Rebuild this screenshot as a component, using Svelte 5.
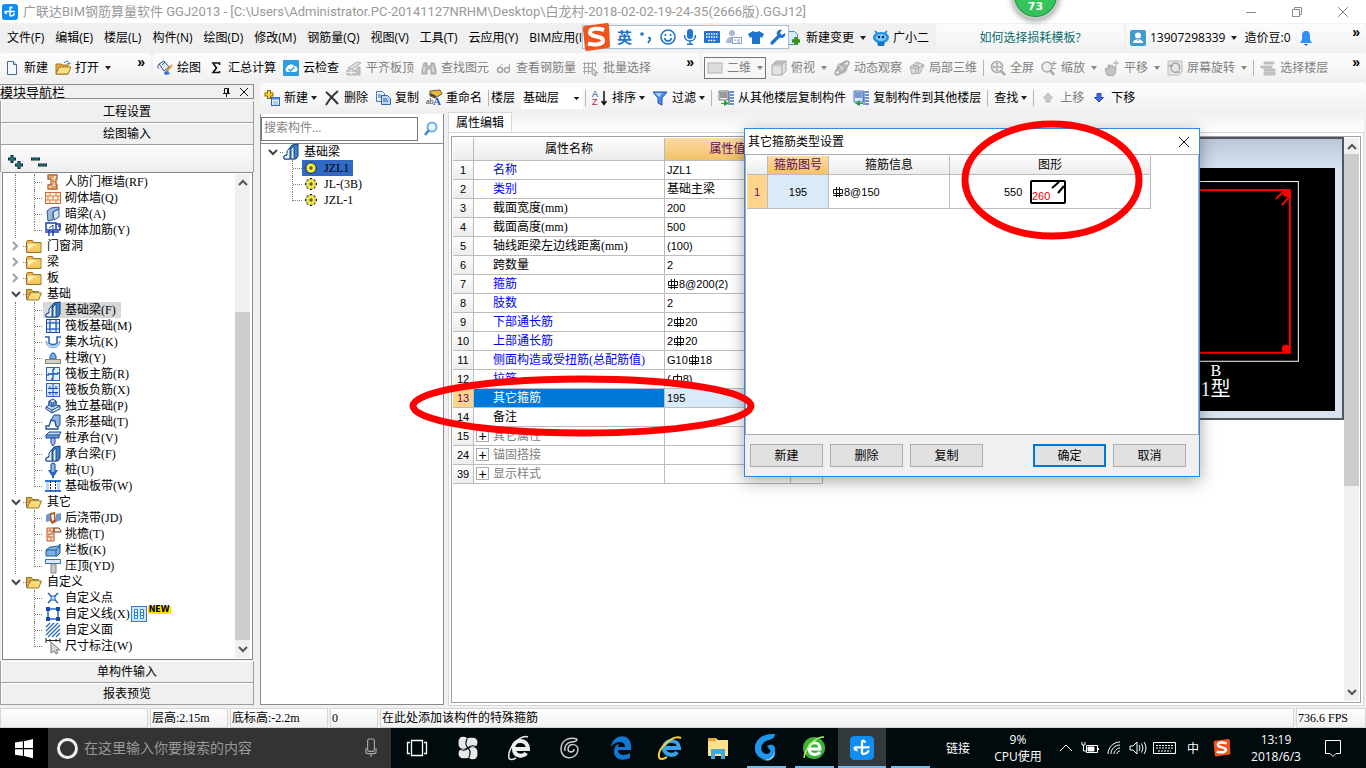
<script>
  const menus = ['文件(F)', '编辑(E)', '楼层(L)', '构件(N)', '绘图(D)', '修改(M)', '钢筋量(Q)', '视图(V)', '工具(T)', '云应用(Y)', 'BIM应用(I)'];

  const fileTools = [
    { icon: 'doc', text: '新建' },
    { icon: 'open', text: '打开', arrow: true },
  ];
  const drawTools = [
    { icon: 'paint', text: '绘图' },
    { icon: 'sigma', text: '汇总计算' },
    { icon: 'cloud', text: '云检查' },
    { icon: 'slab', text: '平齐板顶', off: true },
    { icon: 'binoculars', text: '查找图元', off: true },
    { icon: 'glasses', text: '查看钢筋量', off: true },
    { icon: 'batch', text: '批量选择', off: true },
  ];
  const viewTools = [
    { icon: 'plane', text: '二维', arrow: true, off: true, boxed: true },
    { icon: 'cube', text: '俯视', arrow: true, off: true },
    { icon: 'orbit', text: '动态观察', off: true },
    { icon: 'cubes', text: '局部三维', off: true },
    { sep: true },
    { icon: 'full', text: '全屏', off: true },
    { icon: 'zoom', text: '缩放', arrow: true, off: true },
    { icon: 'hand', text: '平移', arrow: true, off: true },
    { icon: 'rotate', text: '屏幕旋转', arrow: true, off: true },
    { sep: true },
    { icon: 'floors', text: '选择楼层', off: true },
  ];
  const editTools = [
    { icon: 'add', text: '新建', arrow: true },
    { icon: 'del', text: '删除' },
    { icon: 'copy', text: '复制' },
    { icon: 'rename', text: '重命名' },
    { sep: true },
    { floor: true },
    { sep: true },
    { icon: 'sort', text: '排序', arrow: true },
    { icon: 'filter', text: '过滤', arrow: true },
    { sep: true },
    { icon: 'copyfrom', text: '从其他楼层复制构件' },
    { icon: 'copyto', text: '复制构件到其他楼层' },
    { sep: true },
    { text: '查找', arrow: true },
    { sep: true },
    { icon: 'up', text: '上移', off: true },
    { icon: 'down', text: '下移' },
  ];

  const navTree = [
    { icon: 'frame', text: '人防门框墙(RF)' },
    { icon: 'brick', text: '砌体墙(Q)' },
    { icon: 'hidden', text: '暗梁(A)' },
    { icon: 'rebar', text: '砌体加筋(Y)', last: true },
    { folder: true, text: '门窗洞' },
    { folder: true, text: '梁' },
    { folder: true, text: '板' },
    { folder: true, open: true, text: '基础' },
    { icon: 'beam', text: '基础梁(F)', selected: true },
    { icon: 'raft', text: '筏板基础(M)' },
    { icon: 'pit', text: '集水坑(K)' },
    { icon: 'pier', text: '柱墩(Y)' },
    { icon: 'mainbar', text: '筏板主筋(R)' },
    { icon: 'negbar', text: '筏板负筋(X)' },
    { icon: 'isolated', text: '独立基础(P)' },
    { icon: 'strip', text: '条形基础(T)' },
    { icon: 'pilecap', text: '桩承台(V)' },
    { icon: 'beam', text: '承台梁(F)' },
    { icon: 'pile', text: '桩(U)' },
    { icon: 'band', text: '基础板带(W)', last: true },
    { folder: true, open: true, text: '其它' },
    { icon: 'post', text: '后浇带(JD)' },
    { icon: 'eave', text: '挑檐(T)' },
    { icon: 'rail', text: '栏板(K)' },
    { icon: 'coping', text: '压顶(YD)', last: true },
    { folder: true, open: true, text: '自定义' },
    { icon: 'point', text: '自定义点', end: true },
    { icon: 'line', text: '自定义线(X)', end: true, isNew: true },
    { icon: 'area', text: '自定义面', end: true },
    { icon: 'dim', text: '尺寸标注(W)', end: true, last: true },
  ];

  const members = ['JZL1', 'JL-(3B)', 'JZL-1'];

  // "$" = HRB400 bar mark, "%" = HPB300 bar mark
  const props = [
    { no: 1, name: '名称', value: 'JZL1', key: true },
    { no: 2, name: '类别', value: '基础主梁', key: true },
    { no: 3, name: '截面宽度(mm)', value: '200' },
    { no: 4, name: '截面高度(mm)', value: '500' },
    { no: 5, name: '轴线距梁左边线距离(mm)', value: '(100)' },
    { no: 6, name: '跨数量', value: '2' },
    { no: 7, name: '箍筋', value: '$8@200(2)', key: true },
    { no: 8, name: '肢数', value: '2', key: true },
    { no: 9, name: '下部通长筋', value: '2$20', key: true },
    { no: 10, name: '上部通长筋', value: '2$20', key: true },
    { no: 11, name: '侧面构造或受扭筋(总配筋值)', value: 'G10$18', key: true },
    { no: 12, name: '拉筋', value: '(%8)', key: true },
    { no: 13, name: '其它箍筋', value: '195', current: true },
    { no: 14, name: '备注', value: '' },
    { no: 15, name: '其它属性', value: '', group: true },
    { no: 24, name: '锚固搭接', value: '', group: true },
    { no: 39, name: '显示样式', value: '', group: true },
  ];

  const hasCjk = (s) => /[\u4e00-\u9fff]/.test(s);

  let floor = $state('基础层');
  let current = $state('JZL1');
  let keyword = $state('');
  let query = $state('');

  const icons = {
    logo: '<rect width="16" height="16" rx="3" fill="#0f8df2"/><path d="M8 3v9M3 7.500h10M8 3c1 0 2 .5 2 1.500M3 7.500c0 1.500 1 2 2 2M8 12c2 0 4-1 4.500-2.500" fill="none" stroke="#fff" stroke-width="1.500"/>',
    doc: '<path d="M3.500 1.500h6l3 3v10h-9z" fill="#f4f9ff" stroke="#46689c"/><path d="M9.500 1.500v3h3" fill="#cfe0f5" stroke="#46689c"/>',
    open: '<path d="M1 4h5l1 1h6v9H1z" fill="#e8b23c" stroke="#a3741b"/><path d="M1 14l3-7h12l-3 7z" fill="#ffe08a" stroke="#a3741b"/><path d="M9 3c2-3 5-2 5 1M12.500 3l1.500 1.500L15.500 3" fill="none" stroke="#3c6ca8"/>',
    paint: '<path d="M2 4l5-3 5 6-5 4z" fill="#dfe8f7" stroke="#34548a"/><path d="M2 4c-2 2-1 4 0 5M5 5l3-3" fill="none" stroke="#34548a"/><path d="M15 5l-6 7" stroke="#e0a12c" stroke-width="2"/><path d="M7 12l4-1 2 3-5 1z" fill="#2f6fd0"/>',
    sigma: '<path d="M11.500 5V3H5l3.500 5L5 12.500h6.500V11" fill="none" stroke="#111" stroke-width="1.600"/>',
    cloud: '<rect width="16" height="16" rx="1" fill="#2d9de0"/><path d="M4 12a3 3 0 010-5 4 4 0 017-1 3 3 0 011 6z" fill="#fff"/><path d="M5.500 9l2 2 4-4" fill="none" stroke="#2d9de0" stroke-width="1.500"/>',
    slab: '<path d="M2 8l9-6 4 1-9 6z" fill="#e2e2e2" stroke="#aaa"/><path d="M1 10h9v5H1zM11 7h3v8h-3z" fill="#c9c9c9" stroke="#b0b0b0"/><path d="M1 12.500h9M5 10v5" stroke="#f2f2f2"/>',
    binoculars: '<path d="M3 3h3v3h4V3h3l2 7v4h-5V9H6v5H1v-4z" fill="#bdbdbd" stroke="#a5a5a5"/><path d="M3 7v5M12 7v5" stroke="#eee"/>',
    glasses: '<circle cx="4" cy="10" r="2.500" fill="none" stroke="#a5a5a5" stroke-width="1.500"/><circle cx="11" cy="10" r="2.500" fill="none" stroke="#a5a5a5" stroke-width="1.500"/><path d="M1.500 9l5-5M13.500 9V4M6.500 9.500h2" stroke="#a5a5a5" fill="none"/>',
    batch: '<path d="M1.500 2v12M5.500 2v12M9.500 2v7M0 3.500h13M0 7.500h10M0 11.500h8M12.500 2v5" stroke="#a5a5a5" fill="none"/><path d="M9 8l6 5h-3l1 3-2-1-2-1z" fill="#ddd" stroke="#999"/>',
    plane: '<rect x="1" y="3" width="14" height="10" fill="#ddd" stroke="#b5b5b5"/>',
    cube: '<path d="M1 5l4-4h10v10l-4 4H1z" fill="#e2e2e2" stroke="#aaa"/><path d="M2 4l3-3h9l-3 3z" fill="#bbb"/><path d="M1 5h10v10M11 5l4-4" fill="none" stroke="#aaa"/>',
    orbit: '<circle cx="8" cy="8" r="5.500" fill="#bbb"/><ellipse cx="8" cy="8" rx="9" ry="3" transform="rotate(-45 8 8)" fill="none" stroke="#a8a8a8" stroke-width="1.500"/><path d="M5 5l4 5" stroke="#eee"/>',
    cubes: '<path d="M1 7l7-5 7 3-4 8-8 1z" fill="#dcdcdc" stroke="#aaa"/><path d="M1 7l6 2 8-4M7 9l-1 5M4 5l6 2-1 6M10 3l-6 5" fill="none" stroke="#aaa"/>',
    full: '<circle cx="7" cy="7" r="5.500" fill="#eee" stroke="#aaa" stroke-width="1.500"/><path d="M7 3v8M3 7h8M6 4l1-1 1 1M6 10l1 1 1-1M4 6L3 7l1 1M10 6l1 1-1 1" stroke="#999" fill="none"/><path d="M11 11l4 4" stroke="#aaa" stroke-width="2.500"/>',
    zoom: '<circle cx="6" cy="7" r="5" fill="#eee" stroke="#aaa" stroke-width="1.500"/><path d="M9 10l4 5" stroke="#aaa" stroke-width="2.500"/><path d="M13 1v5M10.500 3.500h5M11 8.500h4" stroke="#999"/>',
    hand: '<path d="M3 15L1 9l2-1 1 2V5h2v3l1-3 2 1v2l2-2 1 2-1 6-2 2z" fill="#c4c4c4" stroke="#aaa"/><path d="M12 0v6M9 3h6" stroke="#aaa"/>',
    rotate: '<path d="M1 1h14v11l-3 3H1z" fill="#e6e6e6" stroke="#bbb"/><path d="M4 6a4.500 4.500 0 118 4M4 8c0 3 3 5 6 4M2 5l2 2 2-2M13 12H9" fill="none" stroke="#a5a5a5" stroke-width="1.500"/>',
    floors: '<path d="M4 2h10v2H4zM1 6h11v2H1zM4 9h11v2H4zM4 12h11v3H4z" fill="#c8c8c8" stroke="#b0b0b0" stroke-width=".7"/>',
    add: '<path d="M5 0v9M.5 4.500h9" stroke="#8a6a00" stroke-width="4"/><path d="M5 1v7M1.500 4.500h7" stroke="#ffd52e" stroke-width="2"/><rect x="7.500" y="7.500" width="8" height="8" fill="#e4f0ff" stroke="#2f66c5"/><path d="M8 8.500h7" stroke="#4f8bea" stroke-width="2"/><path d="M9 12h5M9 14h5" stroke="#85a9dd"/>',
    del: '<path d="M2 2c4 3 8 8 12 12M14 1C9 5 5 10 2 15" fill="none" stroke="#333" stroke-width="2"/>',
    copy: '<path d="M1.500 1.500h6l2 2v8h-8z" fill="#e5effb" stroke="#4a76b8"/><path d="M6.500 5.500h6l3 3v6h-9z" fill="#bcd5f5" stroke="#3864ab"/><path d="M3 5h3M3 7h3M8 9h4M8 11h5" stroke="#3864ab"/>',
    rename: '<path d="M4 1l10-1 2 4-7 4-5-2z" fill="#e6bb3a" stroke="#6b5f32"/><path d="M4 4l6 3" stroke="#444" stroke-width="2"/><text x="0" y="14" font-size="8" font-family="Liberation Serif" fill="#333">ab</text><text x="7" y="15" font-size="11" font-weight="bold" font-family="Liberation Serif" fill="#2455bf">A</text>',
    sort: '<text x="0" y="7" font-size="9" font-family="Liberation Sans" fill="#2249b5">A</text><text x="0" y="15" font-size="9" font-family="Liberation Sans" fill="#b02040">Z</text><path d="M12 1v13M9.500 11l2.500 3.500 2.500-3.500" fill="none" stroke="#111" stroke-width="1.500"/>',
    filter: '<path d="M1 2h14L10 8v7l-4-2V8z" fill="#4d8ff0" stroke="#1d4fae"/><path d="M3 3h7L7 7z" fill="#b5d3ff"/>',
    copyfrom: '<path d="M1 1h9v9H1z" fill="#eee" stroke="#777"/><path d="M2 3h7M2 5h7M2 7h7" stroke="#444"/><path d="M12 2h4M12 5h4M12 8h4M12 11h4M12 14h4" stroke="#3970c2" stroke-width="1.600"/><path d="M11 1v14" stroke="#284f91"/><path d="M3 13h3v-3l5 3.500-5 2.500v-2H3z" fill="#20a436"/>',
    copyto: '<path d="M1 1h9v11H1z" fill="#d7e6ff" stroke="#4b74b7"/><path d="M2 3h7M2 5h7M2 7h7" stroke="#244e9b"/><path d="M12 2h4M12 5h4M12 8h4M12 11h4M12 14h4" stroke="#3970c2" stroke-width="1.600"/><path d="M11 1v14" stroke="#284f91"/><path d="M10 13H7v-3l-5 3.500 5 2.500v-2h3z" fill="#20a436"/>',
    up: '<path d="M8 3l4.500 5H10v4H6V8H3.500z" fill="#ccc" stroke="#b5b5b5"/>',
    down: '<path d="M8 12L3.500 7.500H6v-4h4v4h2.500z" fill="#3f6ce0" stroke="#2448ac"/>',
    change: '<path d="M1.500 1.500h7l3 3v10h-10z" fill="#d8ecfb" stroke="#4a8cc0"/><path d="M10 7v8M6 11h8" stroke="#38921c" stroke-width="3.500"/>',
    robot: '<path d="M2 1l3 3h6l3-3" fill="none" stroke="#157ac4" stroke-width="1.500"/><ellipse cx="8" cy="7.500" rx="8" ry="5.500" fill="#1a91e4"/><path d="M4 12h8l-1 4H5z" fill="#1478c4"/><ellipse cx="8" cy="7.500" rx="5.500" ry="3.500" fill="#7cc6fa"/><circle cx="6" cy="7" r="1.200" fill="#123"/><circle cx="10" cy="7" r="1.200" fill="#123"/>',
    user: '<rect width="16" height="16" rx="2" fill="#3f9bd3"/><circle cx="8" cy="5.500" r="3" fill="#fff"/><path d="M3 13c0-5 10-5 10 0z" fill="#fff"/><path d="M8 8v3" stroke="#3f9bd3"/>',
    bell: '<path d="M8 1c-3 0-4 2-4 5v4l-2 3h12l-2-3V6c0-3-1-5-4-5z" fill="#2f8ff5"/><path d="M6 14h4l-2 2z" fill="#1c62bb"/>',
    folder: '<path d="M.5 3.500l1-1h5l1 2h7.500v10H.5z" fill="#e8b44a" stroke="#94732a"/><path d="M1.500 5.500h13v8h-13z" fill="#f5cc62"/><path d="M2 6h9L2 12z" fill="#ffeeb5"/>',
    folderopen: '<path d="M.5 13.500v-10h5l1 2h6v2" fill="#dfa940" stroke="#94732a"/><path d="M1 14l3-7h11.500l-3 7z" fill="#fbd873" stroke="#94732a"/><path d="M5 8h8" stroke="#fff2c4"/>',
    frame: '<path d="M3 1h9v4h-1v6h1v4H3v-4h3V5H3z" fill="#ffe3c8" stroke="#b65c1c" stroke-width="1.300"/><path d="M3 3h6M6 13h6M8 5v3h3M6 10h3" fill="none" stroke="#b65c1c"/>',
    brick: '<rect x=".5" y="2.500" width="15" height="11" fill="#fff1dd" stroke="#c8703a"/><path d="M1 6h14M1 10h14M5 3v3M11 3v3M8 6v4M3 6v4M13 6v4M5 10v3M11 10v3" stroke="#d5824c"/>',
    hidden: '<path d="M2 5l4-3 8-1v2L8 6v8l-5 1z" fill="#9db9de" stroke="#35568c"/><path d="M8 6l6-3v8l-5 3z" fill="#d9e5f5" stroke="#35568c"/>',
    rebar: '<path d="M1 1h10v7H1zM11 2h4v6h-4zM0 10h12M4 8v6M8 8v6M13 4h3M13 9v2" stroke="#1a3fb8" stroke-width="1.500" fill="none"/><path d="M4 6l4-3v4" stroke="#1a4bc0" fill="none"/>',
    beam: '<path d="M1 15v-3l4-2V6l4-5 6-1v12l-2 3z" fill="#3f7fc8" stroke="#143c7a"/><path d="M1 15v-3l3-1V7l3-3v11zM8 15V5l3-3v13z" fill="#e7f1fc" stroke="#1d4f94"/>',
    raft: '<rect x="1.500" y="1.500" width="13" height="13" fill="#e2edff" stroke="#174ba6"/><path d="M5 1v14M11 1v14M1 5h14M1 11h14" stroke="#174ba6"/><rect x="5" y="5" width="6" height="6" fill="#fff" stroke="#2c74d4" stroke-width="1.500"/>',
    pit: '<path d="M0 3h4v6c1 2 7 2 8 0V3h4" fill="none" stroke="#2460b8" stroke-width="1.500"/><path d="M1 7c0 9 14 9 14 0l-3 3c-2 2-6 2-8 0z" fill="#c2dcfa" stroke="#7ca2d4"/>',
    pier: '<path d="M5 9V6l2-3h2l2 3v3z" fill="#7eaeed" stroke="#2456a7"/><rect x=".5" y="9.500" width="15" height="4" fill="#d2d2c8" stroke="#85857c"/>',
    mainbar: '<rect x="1.500" y="1.500" width="13" height="13" fill="#e6f0ff" stroke="#2765c7"/><path d="M8 3v10H6M3 8h10M3 8v2M13 8V6M8 3h2" stroke="#1950b2" fill="none" stroke-width="1.300"/>',
    negbar: '<rect x="1.500" y="1.500" width="13" height="13" fill="#d5e5ff" stroke="#2765c7"/><path d="M8 2v12M3 6.500h10M3 10.500h10M5 4v3M11 4v3M5 10v3M11 10v3" stroke="#1950b2"/>',
    isolated: '<path d="M1 9l3-2V3l4-2 3 2v4l4 1v3l-8 4-6-4z" fill="#cfe0f6" stroke="#1c4a8c"/><path d="M4 7V3l3 2v4zM8 5l3-2v4L8 9z" fill="#7aa6df" stroke="#1c4a8c"/><path d="M1 9l6 3 8-4M7 12v3" fill="none" stroke="#1c4a8c"/>',
    strip: '<path d="M5 8l4-7 6 0v10l-3 3z" fill="#8fb5e4" stroke="#234f8e"/><path d="M1 15v-3h3l2-6 4 1 1 5 2 1v2z" fill="#fff" stroke="#234f8e" stroke-width="1.300"/>',
    pilecap: '<path d="M1 5l3-3h12l-2 4H1z" fill="#b8d5f8" stroke="#1c4a8c"/><path d="M1 5h13v3H1z" fill="#6a9ee2" stroke="#1c4a8c"/><path d="M6 8h4v5l-2 3-2-3z" fill="#9ec3f0" stroke="#1c4a8c"/>',
    pile: '<path d="M6 2l2-1 2 1v8l-2 6-2-6z" fill="#8fbaf0" stroke="#164488"/><path d="M3 8h3v2h4V8h3l-3 5H6z" fill="#2765b5"/>',
    band: '<path d="M0 3h16M0 13h16" stroke="#2f76d5" stroke-width="2"/><path d="M1 4h3v8H1zM12 4h3v8h-3z" fill="#b9d6fa"/><path d="M5.500 3v10M10.500 3v10" stroke="#222" stroke-dasharray="2 1"/>',
    post: '<path d="M1 5l4-2v8l-4 1zM11 4l5-1v7l-5 2z" fill="#6c97d4"/><path d="M5 3l5-1 1 10-4 2-2-3z" fill="#a85a2b"/><path d="M6 5l3-1v6l-2 1z" fill="#f0ece8"/>',
    eave: '<path d="M2 2h7v13H2z" fill="#ffe6cf" stroke="#c0592a"/><path d="M2 5h7M2 8h7M2 11h7M5 2v3M7 5v3M4 8v3M6 11v4" stroke="#c46a32"/><path d="M9 2h5l2 3v1H9z" fill="#ffe6cf" stroke="#5c3a22"/>',
    rail: '<path d="M1 8l4-3 9-1 1-2v9l-3 3H1z" fill="#79b2e4" stroke="#1f588e"/><path d="M1 8h10l4-4M11 8v6" fill="none" stroke="#1f588e"/>',
    coping: '<path d="M.5 1.500h15v4H.5z" fill="#d5e9ff" stroke="#2b70cc"/><path d="M6 6h5v9H6z" fill="#c9c9c9" stroke="#858585"/>',
    point: '<path d="M3 3l10 10M13 3L3 13" stroke="#174a9e" stroke-width="1.200"/><rect x="6" y="6" width="4" height="4" fill="#cfe3ff" stroke="#1d66d2"/>',
    line: '<path d="M3 3h10v10H3z" fill="#fff" stroke="#2267d6" stroke-width="1.500"/><path d="M1 1h4v4H1zM11 1h4v4h-4zM1 11h4v4H1zM11 11h4v4h-4z" fill="#184da5"/>',
    area: '<path d="M1 5l4-4M1 9l8-8M1 13l12-12M3 15L15 3M7 15l8-8M11 15l4-4" stroke="#2267c8" stroke-width="1.200"/>',
    dim: '<path d="M1 0v5M15 0v5M1 2.500h14M5 1v3M11 1v3" stroke="#222"/><path d="M6 4l9 8h-4l2 3-2 1-2-3-3 2z" fill="#d8d8d8" stroke="#777"/>',
    gear: '<path d="M8 2v12M2 8h12M4 4l8 8M12 4l-8 8" stroke="#222" stroke-width="2.500"/><circle cx="8" cy="8" r="4.500" fill="#f3ec3c"/><path d="M8 3v10M3 8h10M4.500 4.500l7 7M11.500 4.500l-7 7" stroke="#f3ec3c"/><path d="M8 6v4M6 8h4" stroke="#333"/>',
    newpage: '<rect x=".5" y=".5" width="15" height="15" fill="#cde6ff" stroke="#2c7fd0"/><path d="M3.500 3.500h3v9h-3zM9.500 3.500h3v9h-3zM3 6.500h4M3 9.500h4M9 6.500h4M9 9.500h4" fill="#fff" stroke="#2c7fd0"/>',
    search: '<circle cx="9" cy="6" r="4.500" fill="#eaf5ff" stroke="#6db3ec" stroke-width="2"/><path d="M6 9l-4 5" stroke="#3e85c8" stroke-width="2.500"/>',
    // input method bar
    sogou: '<path d="M3 3l22-3q2 0 2 2l1 21q0 2-2 2L5 28q-2 0-2-2L1 6q0-3 2-3z" fill="#f1531f"/><path d="M22 7C16 5 8 5 8 9.500c0 5 13 3 13 8 0 4-8 5-15 3" fill="none" stroke="#fff" stroke-width="4"/>',
    comma: '<circle cx="4" cy="5" r="1.800" fill="#1f74d0"/><path d="M10 9q3-1 2 2l-2 3" fill="none" stroke="#1f74d0" stroke-width="1.800"/>',
    smile: '<circle cx="8" cy="8" r="7" fill="none" stroke="#1f74d0" stroke-width="1.600"/><path d="M4.500 9c1 4 6 4 7 0M5.500 5v2M10.500 5v2" fill="none" stroke="#1f74d0" stroke-width="1.600"/>',
    mic: '<rect x="5" y="0" width="6" height="10" rx="3" fill="#1f74d0"/><path d="M2.500 6c0 8 11 8 11 0M8 12v3M5 15.300h6" fill="none" stroke="#1f74d0" stroke-width="1.500"/>',
    kbd: '<rect x="0" y="2" width="16" height="12" rx="1" fill="#1f74d0"/><path d="M2 5h12M2 8h12M4 11.500h8" stroke="#fff" stroke-width="1.500" stroke-dasharray="1.500 1"/>',
    card: '<circle cx="6" cy="4" r="3" fill="#a9b8d4"/><path d="M0 14c0-7 8-7 9-5v5z" fill="#a9b8d4"/><rect x="6.500" y="8.500" width="9" height="6" fill="#fff" stroke="#8ba2cb"/><path d="M8 11h2M11 11h3M11 13h3" stroke="#8ba2cb"/>',
    shirt: '<path d="M5 2q3 2 6 0l5 3-2 4-2-1v7H4V8L2 9 0 5z" fill="#1f74d0"/>',
    wrench: '<path d="M2 14l7-7" stroke="#1f74d0" stroke-width="3.200" stroke-linecap="round"/><path d="M15 4l-3 2-2-2 2-3c-4-1-6 2-5 5s5 4 7 2 1-3 1-4z" fill="#1f74d0"/>',
    // taskbar
    win: '<path d="M0 3l7-1v6H0zM8 2l8-2v8H8zM0 9h7v6l-7-1zM8 9h8v8l-8-2z" fill="#fff"/>',
    mic2: '<rect x="5" y="0" width="6" height="11" rx="1.500" fill="none" stroke="#aaa"/><path d="M3.500 8v3.500q0 1.500 2 1.500h5q2 0 2-1.500V8M8 13v3" fill="none" stroke="#aaa"/>',
  };
</script>

{#snippet icon(name, size = 16)}
  <svg class="icon" width={size} height={size} viewBox="0 0 16 16" aria-hidden="true">{@html icons[name]}</svg>
{/snippet}

{#snippet tools(list)}
  {#each list as t}
    {#if t.sep}
      <i class="sep"></i>
    {:else if t.floor}
      <span class="floor">
        <label for="floor">楼层</label>
        <select id="floor" bind:value={floor}>
          <option>基础层</option>
          <option>首层</option>
        </select>
      </span>
    {:else}
      <button class="tool" class:boxed={t.boxed} disabled={t.off}>
        {#if t.icon}{@render icon(t.icon)}{/if}
        {t.text}
        {#if t.arrow}<i class="arrow"></i>{/if}
      </button>
    {/if}
  {/each}
{/snippet}

{#snippet bars(text)}
  {#each text.split(/([$%])/) as part}
    {#if part === '$' || part === '%'}
      <svg class="bar" width="12" height="12" viewBox="0 0 12 12" aria-label="钢筋">
        <path d={part === '$' ? 'M4.500 1v10M7.500 1v10M1.500 3.500h9v4h-9zM1 9.500h10' : 'M6.500 1v10M2.500 3.500h8v5h-8z'} />
      </svg>
    {:else}{part}{/if}
  {/each}
{/snippet}

{#snippet chevron(open)}
  <svg class="chev" width="10" height="10" viewBox="0 0 10 10" aria-hidden="true">
    {#if open}<path d="M1 3l4 4 4-4" stroke="#444" />{:else}<path d="M2 1l4 4-4 4" stroke="#a0a0a0" />{/if}
  </svg>
{/snippet}

{#snippet scrollArrow(d)}
  <svg width="10" height="8" viewBox="0 0 10 8" aria-hidden="true"><path {d} fill="none" stroke="#555" stroke-width="2" /></svg>
{/snippet}

<div class="app">
  <header class="title">
    {@render icon('logo')}
    <h1>广联达BIM钢筋算量软件 GGJ2013 - [C:\Users\Administrator.PC-20141127NRHM\Desktop\白龙村-2018-02-02-19-24-35(2666版).GGJ12]</h1>
    <div class="winbtns">
      <button aria-label="最小化"><svg width="12" height="12"><path d="M1 6.500h10" /></svg></button>
      <button aria-label="还原"><svg width="12" height="12"><path d="M1.500 3.500h7v7h-7zM3.500 3V1.500h7v7H9" /></svg></button>
      <button aria-label="关闭"><svg width="12" height="12"><path d="M1 1l10 10M11 1L1 11" /></svg></button>
    </div>
  </header>

  <div class="menubar">
    <nav class="menus">
      {#each menus as m}<button>{m}</button>{/each}
    </nav>
    <div class="menutools">
      <button class="tool">{@render icon('change')}新建变更<i class="arrow"></i></button>
      <button class="tool">{@render icon('robot')}广小二</button>
    </div>
    <div class="strip tip"><a href="#help">如何选择损耗模板?</a></div>
    <div class="strip account">
      <button class="tool">{@render icon('user')}13907298339<i class="arrow"></i></button>
      <span>造价豆:0</span>
      {@render icon('bell')}
      <span class="more">»</span>
    </div>
  </div>

  <div class="toolbar">
    <div class="strip">{@render tools(fileTools)}<span class="more">»</span></div>
    <div class="strip">{@render tools(drawTools)}<span class="more">»</span></div>
    <div class="strip">{@render tools(viewTools)}<span class="more">»</span></div>
  </div>

  <main>
    <aside class="nav">
      <div class="navhead">
        <h2>模块导航栏</h2>
        <button aria-label="固定"><svg width="10" height="10"><path d="M2 6.500h7M3.500 6V1.500h3V6M7.500 1v5M5.500 7v3" /></svg></button>
        <button aria-label="关闭"><svg width="10" height="10"><path d="M1 1l8 8M9 1L1 9" /></svg></button>
      </div>
      <button class="section">工程设置</button>
      <button class="section">绘图输入</button>
      <div class="navtools">
        <button aria-label="全部展开"><svg width="18" height="16"><path d="M5 1v8M1 5h8M12 7v8M8 11h8" stroke="#123" stroke-width="3" /><path d="M5 2v6M2 5h6M12 8v6M9 11h6" stroke="#0fa39a" /></svg></button>
        <button aria-label="全部折叠"><svg width="18" height="16"><path d="M1 5h9M8 11h9" stroke="#123" stroke-width="3" /><path d="M2 5h7M9 11h7" stroke="#0fa39a" /></svg></button>
      </div>
      <div class="treebox">
        <ul class="tree">
          {#each navTree as n}
            {#if n.folder}
              <li class="folder">{@render chevron(n.open)}<i class="dots"></i>{@render icon(n.open ? 'folderopen' : 'folder')}<span>{n.text}</span></li>
            {:else}
              <li>
                <i class="trunk" class:blank={n.end}></i>
                <i class="branch" class:last={n.last}></i>
                <span class="node" class:selected={n.selected}>{@render icon(n.icon)}<span>{n.text}</span></span>
                {#if n.isNew}{@render icon('newpage')}<b class="new">NEW</b>{/if}
              </li>
            {/if}
          {/each}
        </ul>
        <div class="scroll navscroll">
          {@render scrollArrow('M1 6l4-4 4 4')}
          <i class="thumb"></i>
          {@render scrollArrow('M1 2l4 4 4-4')}
        </div>
      </div>
      <button class="section">单构件输入</button>
      <button class="section">报表预览</button>
    </aside>

    <section class="work">
      <div class="strip edit">{@render tools(editTools)}</div>
      <div class="panes">
        <div class="members">
          <div class="find">
            <input type="search" aria-label="搜索构件" placeholder="搜索构件..." bind:value={keyword} />
            <button aria-label="搜索">{@render icon('search')}</button>
          </div>
          <ul class="tree">
            <li class="root">{@render chevron(true)}<i class="dots"></i>{@render icon('beam')}<span>基础梁</span></li>
            {#each members as m, i}
              <li class="member">
                <i class="branch" class:last={i === members.length - 1}></i>
                <button class:selected={current === m} onclick={() => (current = m)}>{@render icon('gear')}{m}</button>
              </li>
            {/each}
          </ul>
        </div>

        <div class="props">
          <div class="tabs"><button>属性编辑</button></div>
          <div class="page">
            <div class="inner">
              <table class="grid">
                <colgroup><col class="c1" /><col class="c2" /><col class="c3" /><col class="c4" /></colgroup>
                <thead>
                  <tr><th></th><th>属性名称</th><th class="hot">属性值</th><th></th></tr>
                </thead>
                <tbody>
                  {#each props as p}
                    <tr class:key={p.key} class:current={p.current} class:group={p.group}>
                      <th>{p.no}</th>
                      <td class="name">{#if p.group}<button aria-label="展开">+</button>{/if}<span>{p.name}</span></td>
                      <td class="value" class:latin={!hasCjk(p.value)}>{@render bars(p.value)}</td>
                      <td></td>
                    </tr>
                  {/each}
                </tbody>
              </table>
              <div class="preview">
                <svg viewBox="0 0 500 243" preserveAspectRatio="xMaxYMin slice" role="img" aria-label="箍筋简图">
                  <rect width="500" height="243" fill="#000" />
                  <rect x="60.500" y="13.500" width="403" height="179" fill="none" stroke="#fff" />
                  <rect x="70" y="22" width="385" height="162" fill="none" stroke="#f00" stroke-width="2" />
                  <path d="M450 22l-9 9M455 28l-8 9" stroke="#f00" stroke-width="2" />
                  <circle cx="452" cy="25" r="4" fill="#f00" />
                  <circle cx="451" cy="180" r="4" fill="#f00" />
                  <text x="376" y="207" font-size="16">B</text>
                  <text x="366" y="227" font-size="20">1型</text>
                </svg>
              </div>
              <div class="scroll mainscroll">
                {@render scrollArrow('M1 6l4-4 4 4')}
                <i class="thumb"></i>
                {@render scrollArrow('M1 2l4 4 4-4')}
              </div>
            </div>
          </div>
        </div>
      </div>
    </section>
  </main>

  <footer class="status">
    <span></span><span>层高:2.15m</span><span>底标高:-2.2m</span><span>0</span><span>在此处添加该构件的特殊箍筋</span><span>736.6 FPS</span>
  </footer>

  <div class="taskbar">
    <button class="start" aria-label="开始">{@render icon('win', 18)}</button>
    <label class="cortana">
      <i class="ring"></i>
      <input aria-label="搜索" placeholder="在这里输入你要搜索的内容" bind:value={query} />
      {@render icon('mic2', 18)}
    </label>
    <div class="apps wide">
      <button aria-label="任务视图"><svg width="22" height="20" viewBox="0 0 22 20"><path d="M5.500 2.500h11v15h-11zM4 4.500H1.500v11H4M18 4.500h2.500v11H18" fill="none" stroke="#fff" stroke-width="1.300" /></svg></button>
      <button aria-label="风车"><svg width="24" height="24" viewBox="0 0 24 28"><g fill="#e8e8e8"><rect x="1" y="1" width="11" height="14" rx="5" /><rect x="9" y="2" width="14" height="11" rx="5" /><rect x="12" y="13" width="11" height="14" rx="5" /><rect x="1" y="15" width="14" height="11" rx="5" /></g><path d="M12 14C9 11 9 7 11 3M12 14c3-3 7-3 10-1M12 14c3 3 3 7 1 11M12 14c-3 3-7 3-10 1" fill="none" stroke="#010a0d" stroke-width="1.300" /></svg></button>
      <button aria-label="浏览器"><svg width="26" height="28" viewBox="0 0 26 28"><path d="M20 19c-2 4-12 4-12-4h14C22 5 8 4 7 14" fill="none" stroke="#eee" stroke-width="4" /><path d="M22 3C14 0 1 15 3 24c1 3 5 1 7 0" fill="none" stroke="#eee" stroke-width="1.500" /></svg></button>
      <button aria-label="旋风"><svg width="22" height="24" viewBox="0 0 22 24"><path d="M18 3C8 0 2 6 2 13c0 12 16 11 17 1 0-7-10-7-10-1 0 4 6 4 6 0M18 3c0 3-3 3-6 3-5 1-7 5-6 9" fill="none" stroke="#ccc" stroke-width="1.500" /></svg></button>
      <button aria-label="Edge"><svg width="22" height="24" viewBox="0 0 22 24"><path d="M1 11C3-3 21-3 21 10v4H8c0 6 8 6 12 3v5C9 27 1 20 5 11c1-2 3-3 5-3-2 1-2 2-2 3h7c0-7-10-6-14 0z" fill="#0f78d4" /></svg></button>
    </div>
    <div class="apps">
      <button aria-label="Internet Explorer"><svg width="26" height="26" viewBox="0 0 26 26"><path d="M20 17c-3 5-13 3-13-4h15C22 4 8 4 7 12" fill="none" stroke="#36a3ee" stroke-width="4" /><path d="M24 3C16-1 0 14 2 22c1 4 6 1 8 0" fill="none" stroke="#f6cf3a" stroke-width="2" /></svg></button>
      <button aria-label="文件夹"><svg width="24" height="24" viewBox="0 0 24 24"><path d="M2 2h8l2 2h10v16H2z" fill="#ffe08a" /><path d="M2 2h8v3H2z" fill="#e5a935" /><path d="M5 13h14v10h-4v-5H9v5H5z" fill="#40a8e0" /></svg></button>
      <button class="run" aria-label="GGJ"><svg width="26" height="32" viewBox="0 0 26 32"><path d="M22 2C8 1 1 9 2 18c2 12 19 12 20 1 1-5-2-8-8-5l2 3c2 0 2 5-2 5-8 0-8-12 2-14 4-1 6-3 6-6z" fill="#1f97ee" /><path d="M6 25c5 5 14 2 16-6 1 9-9 13-16 6z" fill="#7fd0ff" /></svg></button>
      <button class="run" aria-label="360浏览器"><svg width="24" height="28" viewBox="0 0 24 28"><circle cx="12" cy="14" r="11" fill="#3cb13a" /><path d="M18 18c-3 4-11 3-11-3h11c0-8-10-8-11-1" fill="none" stroke="#fff" stroke-width="3" /><path d="M22 3C14 2 3 14 2 24" fill="none" stroke="#b6ee6e" stroke-width="1.500" /></svg></button>
      <button class="run active" aria-label="广联达BIM钢筋算量软件">{@render icon('logo', 24)}</button>
      <button class="run" aria-label="窗口"></button>
    </div>
    <div class="tray">
      <span class="link">链接</span>
      <span class="cpu">9%<br />CPU使用</span>
      <span><svg width="14" height="10"><path d="M1 8l6-6 6 6" /></svg></span>
      <span><svg width="18" height="14"><path d="M5.500 4.500h11v7h-11zM17.500 7v2M1 1v3h3V1M2.500 4v6h3" /><path d="M7 6h6v4H7z" fill="#fff" /></svg></span>
      <span><svg width="14" height="14"><path d="M1 13C1 7 6 1 13 1M4 13c0-5 4-9 9-9M7 13c0-3 3-6 6-6M10 13c0-2 1-3 3-3" /></svg></span>
      <span><svg width="18" height="14"><path d="M1 5h3l4-4v12L4 9H1zM10 4q2 3 0 6M12.500 2.500q3 4.500 0 9M15 1q4 6 0 12" /></svg></span>
      <span class="w30"><svg width="24" height="14"><path d="M.5 1.500h22v11H.5z" /><path d="M3 4.500h18M3 7h18M5 10h13" stroke-dasharray="2 1" /></svg></span>
      <span class="w26">中</span>
      <span class="w32"><svg width="18" height="18" viewBox="0 0 29 29">{@html icons.sogou}</svg></span>
      <span class="clock">13:19<br />2018/6/3</span>
      <span class="note"><svg width="18" height="20"><path d="M1.500 2.500h15v13H12l-3 3-3-3H1.500z" /></svg></span>
    </div>
  </div>

  <div class="dialog" role="dialog" aria-labelledby="dlg">
    <div class="dlghead">
      <h2 id="dlg">其它箍筋类型设置</h2>
      <button aria-label="关闭"><svg width="12" height="12"><path d="M1 1l10 10M11 1L1 11" /></svg></button>
    </div>
    <div class="dlgbody">
      <table class="grid">
        <colgroup><col class="d1" /><col class="d2" /><col class="d3" /><col class="d4" /></colgroup>
        <thead>
          <tr><th></th><th class="hot">箍筋图号</th><th>箍筋信息</th><th>图形</th></tr>
        </thead>
        <tbody>
          <tr>
            <th class="hot">1</th>
            <td class="pick latin">195</td>
            <td class="value latin">{@render bars('$8@150')}</td>
            <td>
              <div class="shape">
                <span>550</span>
                <svg width="36" height="24" viewBox="0 0 36 24">
                  <rect x="1" y="1" width="34" height="22" rx="1" fill="none" stroke="#000" stroke-width="2" />
                  <path d="M22 8l7-6M28 13l6-7" stroke="#000" stroke-width="2" />
                  <text x="2" y="20" font-size="11" fill="#e00">260</text>
                </svg>
              </div>
            </td>
          </tr>
        </tbody>
      </table>
    </div>
    <div class="dlgfoot">
      <button>新建</button><button>删除</button><button>复制</button>
      <button class="ok">确定</button><button>取消</button>
    </div>
  </div>

  <div class="ime">
    <svg class="s" width="29" height="29" viewBox="0 0 29 29">{@html icons.sogou}</svg>
    <b>英</b>
    {#each ['comma', 'smile', 'mic', 'kbd', 'card', 'shirt', 'wrench'] as n}{@render icon(n)}{/each}
  </div>

  <div class="ball">73</div>

  <svg class="mark first" width="184" height="122" aria-hidden="true"><ellipse cx="92" cy="61" rx="87" ry="56" /></svg>
  <svg class="mark second" width="346" height="62" aria-hidden="true"><ellipse cx="173" cy="31" rx="169" ry="27" /></svg>
</div>

<style>
  :global(body) {
    margin: 0;
    background: #f0f0f0;
  }

  .app {
    position: relative;
    display: flex;
    flex-direction: column;
    min-height: 100vh;
    overflow: hidden;
    font: 12px/16px "Open Sans", "Noto Sans CJK SC", sans-serif;
    color: #000;
    background: #f0f0f0;
  }

  .app :global(*) {
    box-sizing: border-box;
  }

  button, input, select {
    font: inherit;
    color: inherit;
    padding: 0;
    border: 0;
    border-radius: 0;
    background: none;
    white-space: nowrap;
  }

  h1, h2, ul {
    margin: 0;
    padding: 0;
    font: inherit;
    list-style: none;
  }

  svg {
    flex: none;
    display: block;
    overflow: visible;
  }

  /* title */
  .title {
    display: flex;
    align-items: center;
    gap: 5px;
    height: 23px;
    padding-left: 2px;
    background: #fff;
    color: #999;
  }

  .title h1 {
    flex: 1;
    font-family: Roboto, "Noto Sans CJK SC", sans-serif;
    font-size: 13px;
    white-space: nowrap;
  }

  .winbtns {
    display: flex;
  }

  .winbtns button {
    display: grid;
    place-items: center;
    width: 46px;
    height: 20px;
  }

  .winbtns path, .navhead path, .dlghead path {
    fill: none;
    stroke: #888;
  }

  /* menu and tool bars */
  .strip {
    display: flex;
    align-items: center;
    gap: 7px;
    height: 29px;
    padding: 0 4px;
    background: linear-gradient(#fcfcfc, #f6f6f6 60%, #efefef);
    border-radius: 3px;
    white-space: nowrap;
  }

  .menubar {
    display: flex;
    align-items: center;
    gap: 2px;
    height: 30px;
    white-space: nowrap;
  }

  .menus {
    display: flex;
    gap: 11px;
    width: 784px;
    padding-left: 7px;
    overflow: hidden;
  }

  .menutools {
    display: flex;
    gap: 7px;
    width: 148px;
  }

  .tip {
    justify-content: center;
    width: 188px;
  }

  .tip a {
    color: #0b6b6b;
    text-decoration: none;
  }

  .account {
    flex: 1;
  }

  .tool {
    display: flex;
    align-items: center;
    gap: 4px;
    height: 22px;
  }

  .tool:disabled {
    color: #808080;
  }

  .boxed {
    margin: 0 -2px;
    padding: 0 2px;
    border: 1px solid #777;
    background: #f6f6f6;
  }

  .arrow {
    margin-left: 2px;
    border: 3px solid transparent;
    border-top: 4px solid #222;
    border-bottom: 0;
  }

  .tool:disabled .arrow {
    border-top-color: #888;
  }

  .edit .arrow {
    margin-left: -1px;
  }

  .more {
    margin-left: auto;
    padding: 0 2px 12px 0;
    font: bold 14px/12px "Liberation Sans", sans-serif;
  }

  .sep {
    width: 1px;
    height: 16px;
    margin: 0 -1px;
    background: #b4b4b4;
  }

  .toolbar {
    display: grid;
    grid-template-columns: 151px 547px 1fr;
    gap: 2px;
    height: 30px;
  }

  .floor {
    display: flex;
    align-items: center;
    gap: 6px;
    margin: 0 -4px;
  }

  .floor select {
    width: 62px;
    height: 22px;
    padding-left: 2px;
    appearance: none;
    background: linear-gradient(#222, #222) no-repeat 53px 10px / 5px 1px,
      linear-gradient(#222, #222) no-repeat 54px 11px / 3px 1px,
      linear-gradient(#222, #222) no-repeat 55px 12px / 1px 1px, #fff;
  }

  /* navigation */
  main {
    flex: 1;
    display: flex;
    gap: 6px;
  }

  .nav {
    display: flex;
    flex-direction: column;
    width: 254px;
    padding-top: 1px;
    padding-bottom: 2px;
  }

  .navhead {
    display: flex;
    align-items: center;
    gap: 8px;
    height: 15px;
    margin-bottom: 2px;
    padding-right: 4px;
    border: 1px solid #8c8c8c;
    border-left: 0;
  }

  .navhead h2 {
    flex: 1;
    font-size: 13px;
  }

  .navhead path, .dlghead path {
    stroke: #111;
  }

  .section {
    height: 22px;
    border: 1px solid #a0a0a0;
    border-width: 0 1px 1px;
    box-shadow: inset 1px 1px #fff;
    background: #f0f0f0;
  }

  .navtools {
    display: flex;
    gap: 5px;
    height: 27px;
    padding: 6px 6px 0;
    border: 1px solid #a0a0a0;
    border-width: 0 1px;
    background: linear-gradient(#fcfcfc, #eee);
  }

  .treebox {
    flex: 1;
    display: flex;
    border: 1px solid #828790;
    margin: 0 1px 1px 2px;
    background: #fff;
  }

  .treebox .tree {
    flex: 1;
    padding: 1px 0 4px 8px;
  }

  .tree {
    font-family: "Liberation Serif", "Noto Sans CJK SC", serif;
  }

  .tree li {
    display: flex;
    align-items: center;
    height: 16px;
    white-space: nowrap;
  }

  .tree span {
    line-height: 16px;
  }

  .chev {
    fill: none;
    stroke-width: 2;
  }

  .dots {
    width: 3px;
    margin: 0 0 0 2px;
    border-top: 1px dotted #808080;
  }

  .folder .icon, .root .icon {
    margin-right: 5px;
  }

  .trunk {
    width: 19px;
    height: 16px;
    margin-left: 4px;
    border-left: 1px dotted #808080;
  }

  .blank {
    border-color: transparent;
  }

  .branch {
    width: 9px;
    height: 16px;
    background: repeating-linear-gradient(90deg, #808080 0 1px, transparent 1px 2px) no-repeat 0 8px / 100% 1px;
    border-left: 1px dotted #808080;
  }

  .branch.last {
    height: 9px;
    align-self: flex-start;
  }

  .node {
    display: flex;
    gap: 4px;
    height: 16px;
    padding: 0 5px 0 2px;
    margin-right: -4px;
  }

  .node.selected {
    background: #d8d8d8;
  }

  .new {
    align-self: flex-start;
    margin-left: 1px;
    padding: 0 1px;
    font: bold 8px/8px "DejaVu Sans", sans-serif;
    background: #ffe600;
  }

  .scroll {
    display: flex;
    flex-direction: column;
    align-items: center;
    width: 15px;
    padding: 5px 0;
    background: #f0f0f0;
  }

  .navscroll {
    margin: 1px 2px;
  }

  .thumb {
    width: 100%;
    background: #cdcdcd;
  }

  .navscroll .thumb {
    flex: 330;
    margin: 125px 0 5px;
  }

  /* work area */
  .work {
    flex: 1;
    display: flex;
    flex-direction: column;
    min-width: 0;
  }

  .panes {
    flex: 1;
    display: flex;
    gap: 4px;
    padding-bottom: 1px;
  }

  .members {
    width: 184px;
    display: flex;
    flex-direction: column;
    margin: 2px 0 1px;
    border: 1px solid #828790;
    border-top: 0;
    background: #fff;
  }

  .find {
    display: flex;
    height: 30px;
    padding-top: 3px;
    border-bottom: 1px solid #828790;
  }

  .find input {
    width: 157px;
    height: 24px;
    padding: 0 2px 4px;
    border: 1px solid #777;
    background: #fff;
  }

  input::placeholder {
    color: #858585;
    opacity: 1;
  }

  .find button {
    display: grid;
    place-items: center;
    flex: 1;
    height: 24px;
  }

  .members .tree {
    padding-left: 7px;
  }

  .member {
    padding-left: 24px;
  }

  .member .branch {
    width: 10px;
  }

  .member button {
    display: flex;
    gap: 5px;
    height: 16px;
    padding: 0 4px 0 1px;
  }

  .member button.selected {
    background: #316ac5;
  }

  .props {
    flex: 1;
    display: flex;
    flex-direction: column;
    min-width: 0;
    padding-right: 2px;
  }

  .tabs button {
    width: 64px;
    height: 20px;
    border: 1px solid #d8d8d8;
    border-bottom: 0;
    background: #fff;
  }

  .tabs {
    height: 20px;
    background: linear-gradient(#f0f0f0, #fff);
  }

  .page {
    flex: 1;
    display: flex;
    padding: 3px 2px 2px;
    border: 1px solid #d8d8d8;
    background: #fff;
  }

  .inner {
    flex: 1;
    display: flex;
    min-width: 0;
    padding: 1px;
    border: 1px solid #a0a0a8;
  }

  .grid {
    table-layout: fixed;
    border-collapse: separate;
    border-spacing: 0;
    align-self: flex-start;
    font-family: "Liberation Serif", "Noto Sans CJK SC", sans-serif;
  }

  .props .grid {
    width: 370px;
  }

  .c1 { width: 21px; }
  .c2 { width: 191px; }
  .c3 { width: 126px; }
  .c4 { width: 32px; }

  .grid th, .grid td {
    height: 19px;
    padding: 0;
    border: 1px solid #bcbcbc;
    border-width: 0 1px 1px 0;
    font-weight: normal;
    line-height: 16px;
    white-space: nowrap;
  }

  .grid th {
    background: linear-gradient(#fdfdfd, #ececec);
  }

  .grid tbody th {
    font-family: "Liberation Sans", sans-serif;
    font-size: 11px;
  }

  .props thead th {
    height: 23px;
  }

  .grid th.hot {
    color: #5c0a5c;
    background: linear-gradient(#fbdca4, #f2c268);
  }

  .name {
    position: relative;
  }

  .name span {
    margin-left: 19px;
  }

  .name button {
    position: absolute;
    left: 2px;
    top: 2px;
    width: 13px;
    height: 13px;
    border: 1px solid #aaa;
    background: #fff;
    font: 14px/10px "Liberation Sans", sans-serif;
  }

  .key .name {
    color: #00f;
  }

  .group .name span {
    color: #808080;
  }

  .grid td.value {
    padding-left: 2px;
  }

  .grid td.latin {
    font-family: "Liberation Sans", sans-serif;
    font-size: 11px;
  }

  .bar {
    display: inline-block;
    vertical-align: -2px;
    fill: none;
    stroke: #111;
  }

  .grid .current th {
    color: #5c0a5c;
    background: #ffd48c;
  }

  .current .name {
    color: #fff;
    background: #0078d7;
  }

  .current .value, .pick {
    background: #d9eaf9;
  }

  .preview {
    flex: 1;
    align-self: flex-start;
    min-width: 0;
    margin: -1px 0 0 1px;
    padding: 29px 7px 7px;
    border: 2px solid #555560;
    background: linear-gradient(#b9c8d8, #d7e3f1 30px);
  }

  .preview svg {
    width: 100%;
    height: 243px;
    overflow: hidden;
  }

  .preview text {
    fill: #fff;
    font-family: "Liberation Serif", "Noto Sans CJK SC", serif;
  }

  .mainscroll .thumb {
    flex: 0 0 332px;
    margin: 3px 0 auto;
  }

  /* status */
  .status {
    display: grid;
    grid-template-columns: 148px 78px 98px 48px 1fr 70px;
    gap: 2px;
    height: 21px;
    padding-top: 1px;
    font-family: "Liberation Serif", "Noto Sans CJK SC", serif;
  }

  .status span {
    padding-left: 1px;
    border: 1px solid #d5d5d5;
    background: linear-gradient(#fff, #f0f0f0);
    line-height: 18px;
    white-space: nowrap;
  }

  /* taskbar */
  .taskbar {
    display: flex;
    height: 40px;
    background: #010a0d;
    color: #fff;
  }

  .taskbar button, .tray span {
    display: flex;
    align-items: center;
    justify-content: center;
  }

  .start {
    width: 48px;
    background: #000;
  }

  .cortana {
    display: flex;
    align-items: center;
    gap: 6px;
    width: 343px;
    padding: 0 11px 0 9px;
    background: #333;
  }

  .cortana input {
    flex: 1;
    min-width: 0;
    font-size: 14px;
  }

  .cortana input::placeholder {
    color: #999;
  }

  .ring {
    width: 21px;
    height: 21px;
    border: 3px solid #eee;
    border-radius: 50%;
  }

  .apps {
    display: flex;
  }

  .apps button {
    width: 48px;
  }

  .wide button {
    width: 51px;
  }

  .run {
    background: linear-gradient(#76b9ed, #76b9ed) no-repeat 50% 100% / 39px 2px;
  }

  .run.active {
    background: linear-gradient(#76b9ed, #76b9ed) no-repeat 50% 100% / 100% 2px, #33393c;
  }

  .tray {
    display: flex;
    margin-left: auto;
    padding-right: 14px;
    text-align: center;
    line-height: 17px;
  }

  .tray span {
    width: 24px;
  }

  .tray svg {
    fill: none;
    stroke: #fff;
  }

  .tray .w32 svg {
    stroke: none;
  }

  .tray .link { width: 48px; }
  .tray .cpu { width: 72px; }
  .tray .w30 { width: 30px; }
  .tray .w26 { width: 26px; }
  .tray .w32 { width: 32px; }
  .tray .clock { width: 76px; }
  .tray .note { width: 38px; }

  /* floating windows */
  .dialog {
    position: absolute;
    left: 744px;
    top: 128px;
    width: 456px;
    border: 1px solid #2d8ae6;
    background: #f0f0f0;
    box-shadow: 0 4px 16px rgba(0, 0, 0, 0.35);
  }

  .dlghead {
    display: flex;
    align-items: center;
    justify-content: space-between;
    height: 25px;
    padding: 0 9px 0 3px;
    background: #fff;
  }

  .dlgbody {
    height: 281px;
    padding: 1px;
    border: 1px solid #a9a9b2;
    background: #fff;
  }

  .dialog .grid {
    width: 404px;
  }

  .dialog tbody td {
    height: 34px;
  }

  .dialog .grid tbody th {
    background: #ffd48c;
  }

  .d1 { width: 21px; }
  .d2 { width: 61px; }
  .d3 { width: 121px; }
  .d4 { width: 201px; }

  .pick {
    text-align: center;
  }

  .dialog td.value {
    padding-left: 3px;
  }

  .shape {
    display: flex;
    align-items: center;
    gap: 8px;
    padding-left: 54px;
    font: 11px/16px "Liberation Sans", sans-serif;
  }

  .dlgfoot {
    display: flex;
    gap: 7px;
    padding: 9px 13px 9px 5px;
  }

  .dlgfoot button {
    width: 73px;
    height: 23px;
    border: 1px solid #adadad;
    background: #e1e1e1;
  }

  .dlgfoot .ok {
    margin-left: auto;
    border: 2px solid #0078d7;
  }

  .ime {
    position: absolute;
    left: 582px;
    top: 25px;
    display: flex;
    align-items: center;
    gap: 6px;
    width: 207px;
    height: 24px;
    border: 1px solid #a9bdd8;
    background: #fff;
  }

  .ime .s {
    margin-left: -1px;
  }

  .ime b {
    font-size: 15px;
    color: #1f74d0;
  }

  .ball {
    position: absolute;
    left: 1012px;
    top: -28px;
    display: flex;
    align-items: flex-end;
    justify-content: center;
    width: 47px;
    height: 47px;
    border: 2px solid #c5cfc8;
    border-radius: 50%;
    background: #35c45a;
    box-shadow: 0 2px 6px rgba(0, 0, 0, 0.4), inset 0 0 0 1px #2d8b48;
    color: #fff;
    font: bold 11px/20px "DejaVu Sans", sans-serif;
  }

  .mark {
    position: absolute;
    fill: none;
    stroke: #f00;
    stroke-width: 7px;
    pointer-events: none;
  }

  .first {
    left: 960px;
    top: 119px;
  }

  .second {
    left: 409px;
    top: 375px;
  }
</style>
